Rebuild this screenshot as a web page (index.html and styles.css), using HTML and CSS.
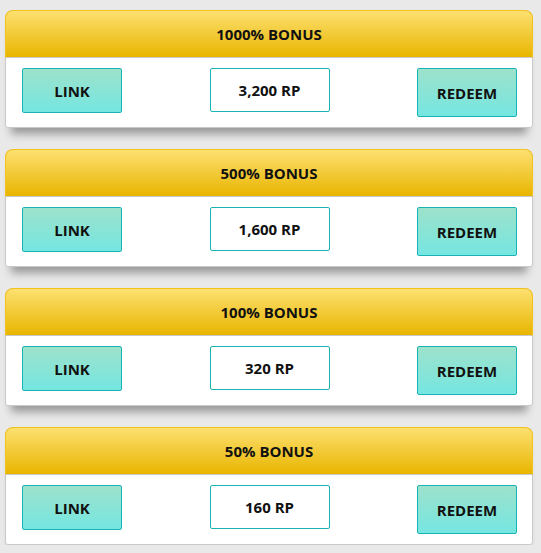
FILE: index.html
```html
<!DOCTYPE html>
<html lang="en">
<head>
    <meta charset="UTF-8">
    <meta name="viewport" content="width=device-width, initial-scale=1.0">
    <title>Bonus offers</title>
    <link rel="stylesheet" href="styles.css">
</head>
<body>
    <div id="offers">
        <div class="offer">
            <div class="offer-title">1000% BONUS</div>
            <div class="offer-body">
                <div class="btn">LINK</div>
                <div class="amount">3,200 RP</div>
                <div class="btn btn-redeem">REDEEM</div>
            </div>
        </div>

        <div class="offer">
            <div class="offer-title">500% BONUS</div>
            <div class="offer-body">
                <div class="btn">LINK</div>
                <div class="amount">1,600 RP</div>
                <div class="btn btn-redeem">REDEEM</div>
            </div>
        </div>

        <div class="offer">
            <div class="offer-title">100% BONUS</div>
            <div class="offer-body">
                <div class="btn">LINK</div>
                <div class="amount">320 RP</div>
                <div class="btn btn-redeem">REDEEM</div>
            </div>
        </div>

        <div class="offer">
            <div class="offer-title">50% BONUS</div>
            <div class="offer-body">
                <div class="btn">LINK</div>
                <div class="amount">160 RP</div>
                <div class="btn btn-redeem">REDEEM</div>
            </div>
        </div>
    </div>
</body>
</html>
```

FILE: styles.css
```css
body {
    background-color: #e9e9e9;
    font-family: 'Open Sans', 'Liberation Sans', sans-serif;
    color: #111;
    margin: 0;
    padding: 0;
    overflow: hidden;
}
#offers {
    display: flex;
    flex-direction: column;
    gap: 21px;
    padding: 10px 8px 0 5px;
}
.offer {
    background-color: #fff;
    border: 1px solid #c9c9c9;
    border-radius: 8px 8px 3px 3px;
    box-shadow: 0 12px 8px -6px rgba(0, 0, 0, 0.35);
}
.offer-title {
    height: 46px;
    line-height: 46px;
    text-align: center;
    font-size: 15px;
    font-weight: bold;
    margin: -1px -1px 0 -1px;
    border: 1px solid #f3c21d;
    border-bottom: 1px solid #c8c8c8;
    border-radius: 8px 8px 0 0;
    background: linear-gradient(to bottom, #fde070, #e8b500);
}
.offer-body {
    display: flex;
    justify-content: space-between;
    align-items: flex-start;
    padding: 10px 15px 10px 16px;
}
.btn {
    width: 98px;
    height: 43px;
    display: flex;
    align-items: center;
    justify-content: center;
    font-size: 15px;
    font-weight: bold;
    border: 1px solid #1ab3b5;
    border-radius: 2px;
    background: linear-gradient(to bottom, #9de2cb, #75e6e1);
}
.btn-redeem {
    height: 47px;
}
.amount {
    width: 118px;
    height: 42px;
    display: flex;
    align-items: center;
    justify-content: center;
    font-size: 15px;
    font-weight: bold;
    border: 1px solid #1ab3b5;
    border-radius: 2px;
    background-color: #fff;
}
```
